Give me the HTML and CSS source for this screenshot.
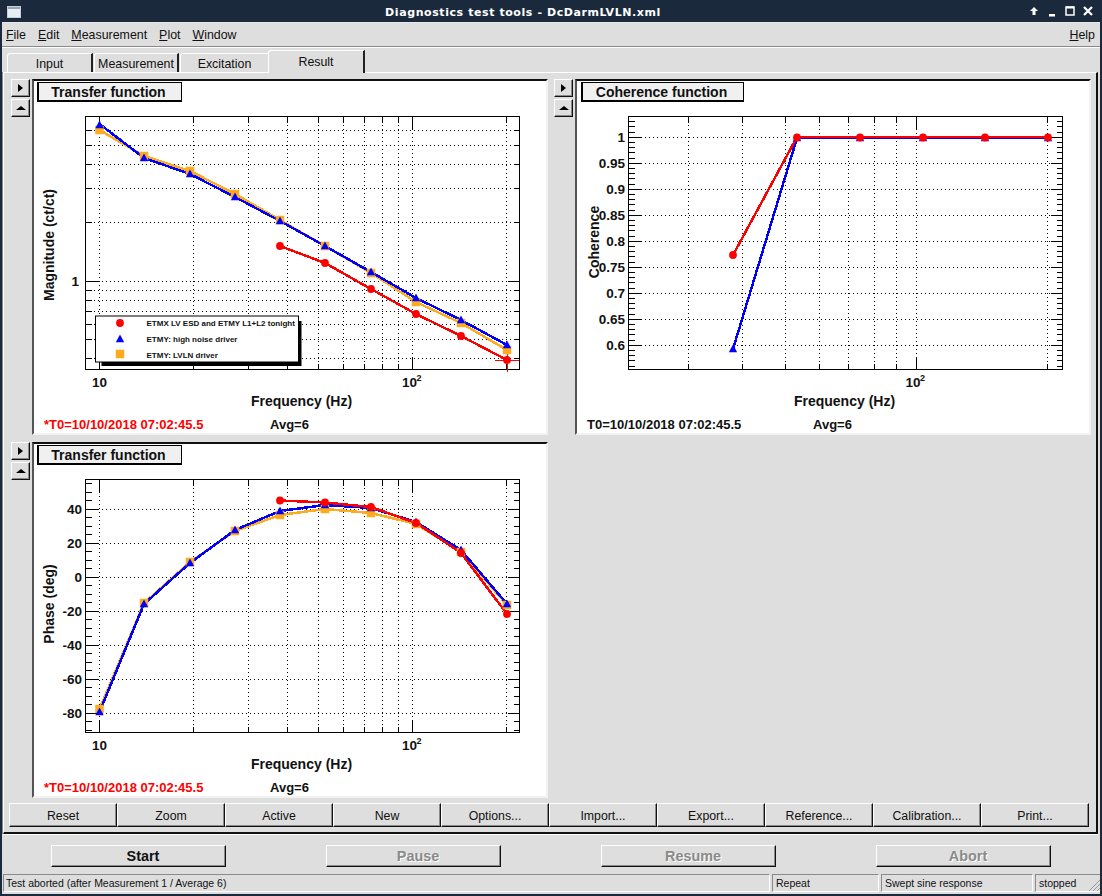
FILE: index.html
```html
<!DOCTYPE html>
<html lang="en">
<head>
  <meta charset="UTF-8" />
  <title>Diagnostics test tools - DcDarmLVLN.xml</title>
  <link rel="stylesheet" href="styles.css">
</head>
<body>

<div class="window">
  <!-- Title bar -->
  <header class="titlebar">
    <svg class="win-icon" width="14" height="12" viewBox="0 0 14 12">
      <rect width="14" height="12" fill="#e8eef4"/>
      <rect width="14" height="3" fill="#8fa6bd"/>
      <rect x="0.5" y="0.5" width="13" height="11" fill="none" stroke="#c4d0dc"/>
    </svg>
    <span class="win-title">Diagnostics test tools - DcDarmLVLN.xml</span>
    <div class="win-controls">
      <svg width="18" height="14" viewBox="0 0 18 14"><path d="M9 3l4 4h-2.500v4h-3v-4h-2.500z" fill="#fff"/></svg>
      <svg width="18" height="14" viewBox="0 0 18 14"><rect x="6" y="10" width="6" height="2.500" fill="#fff"/></svg>
      <svg width="18" height="14" viewBox="0 0 18 14"><rect x="5" y="3" width="8" height="8" fill="none" stroke="#fff" stroke-width="1.500"/><rect x="5" y="2.500" width="8" height="2" fill="#fff"/></svg>
      <svg width="18" height="14" viewBox="0 0 18 14"><path d="M5 3l8 8M13 3l-8 8" stroke="#fff" stroke-width="2.200"/></svg>
    </div>
  </header>

  <!-- Menu -->
  <nav class="menubar">
    <a><u>F</u>ile</a>
    <a><u>E</u>dit</a>
    <a><u>M</u>easurement</a>
    <a><u>P</u>lot</a>
    <a><u>W</u>indow</a>
    <a class="menu-help"><u>H</u>elp</a>
  </nav>

  <!-- Tabs -->
  <div class="tabs">
    <div class="tab tab-input">Input</div>
    <div class="tab tab-meas">Measurement</div>
    <div class="tab tab-exc">Excitation</div>
    <div class="tab tab-result">Result</div>
  </div>

  <div class="panel">
    <div class="plots">

      <!-- Magnitude -->
      <div class="plot-cell">
        <div class="side-btns">
          <button class="side-btn"><span class="arrow-right"></span></button>
          <button class="side-btn"><span class="arrow-up"></span></button>
        </div>
        <div class="canvas">
          <svg id="magnitude" width="512" height="352" viewBox="34 81 512 352">
            <defs>
              <circle id="dot" r="3.900" fill="#f00"/>
              <rect id="sq" x="-4.250" y="-4.250" width="8.500" height="8.500" fill="#ffab1e"/>
              <polygon id="tri" points="0,-4.500 4.200,3.300 -4.200,3.300" fill="#00f"/>
            </defs>
            <g class="title-box">
              <rect x="37" y="82" width="145" height="20" fill="#000"/>
              <rect x="39" y="83" width="142" height="17" fill="#f0f0f0"/>
              <text x="108.500" y="97" class="title-text">Transfer function</text>
            </g>
            <text x="79" y="286" class="tick-y">1</text>
            <text x="99.500" y="387" class="tick-x">10</text>
            <text x="409.500" y="387" class="tick-x">10</text>
            <text x="416.500" y="381" class="tick-sup">2</text>
            <text x="301.500" y="406" class="axis-title">Frequency (Hz)</text>
            <text transform="translate(54 245) rotate(-90)" class="axis-title">Magnitude (ct/ct)</text>
            <text x="44" y="429" class="stamp stamp-red">*T0=10/10/2018 07:02:45.5</text>
            <text x="270" y="429" class="stamp">Avg=6</text>

            <polyline class="trace trace-orange" points="99.500,130 144,156 190,171 235,194 280,220 325,246 371,273 416,302 461,323 507,350"/>
            <polyline class="trace trace-blue" points="99.500,124 144,158 190,174 235,197 280,221 325,246 371,272 416,298 461,320 507,345"/>
            <polyline class="trace trace-red" points="280,246 325,263 371,289 416,314 461,336 507,360"/>
            <path class="cross" d="M495 360.500h24M507.500 346v26"/>
            <g>
              <use href="#sq" x="99.500" y="130"/><use href="#sq" x="144" y="156"/><use href="#sq" x="190" y="171"/><use href="#sq" x="235" y="194"/><use href="#sq" x="280" y="220"/><use href="#sq" x="325" y="246"/><use href="#sq" x="371" y="273"/><use href="#sq" x="416" y="302"/><use href="#sq" x="461" y="323"/><use href="#sq" x="507" y="350"/>
              <use href="#tri" x="99.500" y="125"/><use href="#tri" x="144" y="158"/><use href="#tri" x="190" y="174"/><use href="#tri" x="235" y="197"/><use href="#tri" x="280" y="221"/><use href="#tri" x="325" y="246"/><use href="#tri" x="371" y="272"/><use href="#tri" x="416" y="298"/><use href="#tri" x="461" y="320"/><use href="#tri" x="507" y="345"/>
              <use href="#dot" x="280" y="246"/><use href="#dot" x="325" y="263"/><use href="#dot" x="371" y="289"/><use href="#dot" x="416" y="314"/><use href="#dot" x="461" y="336"/><use href="#dot" x="507" y="360"/>
            </g>

            <!-- Legend -->
            <rect x="101.500" y="321" width="200" height="45" fill="#000"/>
            <rect x="95.500" y="316" width="203" height="46" fill="#fff" stroke="#000"/>
            <use href="#dot" x="120" y="323"/>
            <use href="#tri" x="120" y="339"/>
            <use href="#sq" x="120" y="354"/>
            <text x="146.500" y="326" class="legend-text">ETMX LV ESD and ETMY L1+L2 tonight</text>
            <text x="146.500" y="342" class="legend-text">ETMY: high noise driver</text>
            <text x="146.500" y="358" class="legend-text">ETMY: LVLN driver</text>
          </svg>
        </div>
      </div>

      <!-- Coherence -->
      <div class="plot-cell">
        <div class="side-btns">
          <button class="side-btn"><span class="arrow-right"></span></button>
          <button class="side-btn"><span class="arrow-up"></span></button>
        </div>
        <div class="canvas">
          <svg id="coherence" width="512" height="352" viewBox="577 81 512 352">
            <g class="title-box">
              <rect x="581" y="82" width="163" height="20" fill="#000"/>
              <rect x="583" y="83" width="160" height="17" fill="#f0f0f0"/>
              <text x="661.500" y="97" class="title-text">Coherence function</text>
            </g>
            <text x="625" y="142" class="tick-y">1</text>
            <text x="625" y="168" class="tick-y">0.95</text>
            <text x="625" y="194" class="tick-y">0.9</text>
            <text x="625" y="220" class="tick-y">0.85</text>
            <text x="625" y="246" class="tick-y">0.8</text>
            <text x="625" y="272" class="tick-y">0.75</text>
            <text x="625" y="298" class="tick-y">0.7</text>
            <text x="625" y="324" class="tick-y">0.65</text>
            <text x="625" y="350" class="tick-y">0.6</text>
            <text x="913" y="387" class="tick-x">10</text>
            <text x="920" y="381" class="tick-sup">2</text>
            <text x="844.500" y="406" class="axis-title">Frequency (Hz)</text>
            <text transform="translate(599 242) rotate(-90)" class="axis-title">Coherence</text>
            <text x="587" y="429" class="stamp">T0=10/10/2018 07:02:45.5</text>
            <text x="813" y="429" class="stamp">Avg=6</text>

            <polyline class="trace trace-blue" points="733,349 797,138 860,138 923,138 985,138 1048,138"/>
            <polyline class="trace trace-red" points="733,255 797,137 860,137 923,137 985,137 1048,137"/>
            <use href="#tri" x="733" y="349"/><use href="#tri" x="797" y="138"/><use href="#tri" x="860" y="138"/><use href="#tri" x="923" y="138"/><use href="#tri" x="985" y="138"/><use href="#tri" x="1048" y="138"/>
            <use href="#dot" x="733" y="255"/><use href="#dot" x="797" y="137.500"/><use href="#dot" x="860" y="137.500"/><use href="#dot" x="923" y="137.500"/><use href="#dot" x="985" y="137.500"/><use href="#dot" x="1048" y="137.500"/>
          </svg>
        </div>
      </div>

      <!-- Phase -->
      <div class="plot-cell">
        <div class="side-btns">
          <button class="side-btn"><span class="arrow-right"></span></button>
          <button class="side-btn"><span class="arrow-up"></span></button>
        </div>
        <div class="canvas">
          <svg id="phase" width="512" height="352" viewBox="34 444 512 352">
            <g class="title-box">
              <rect x="37" y="445" width="145" height="20" fill="#000"/>
              <rect x="39" y="446" width="142" height="17" fill="#f0f0f0"/>
              <text x="108.500" y="460" class="title-text">Transfer function</text>
            </g>
            <text x="82" y="514" class="tick-y">40</text>
            <text x="82" y="548" class="tick-y">20</text>
            <text x="82" y="582" class="tick-y">0</text>
            <text x="82" y="616" class="tick-y">-20</text>
            <text x="82" y="650" class="tick-y">-40</text>
            <text x="82" y="684" class="tick-y">-60</text>
            <text x="82" y="718" class="tick-y">-80</text>
            <text x="99.500" y="750" class="tick-x">10</text>
            <text x="409.500" y="750" class="tick-x">10</text>
            <text x="416.500" y="744" class="tick-sup">2</text>
            <text x="301.500" y="769" class="axis-title">Frequency (Hz)</text>
            <text transform="translate(54 604) rotate(-90)" class="axis-title">Phase (deg)</text>
            <text x="44" y="792" class="stamp stamp-red">*T0=10/10/2018 07:02:45.5</text>
            <text x="270" y="792" class="stamp">Avg=6</text>

            <polyline class="trace trace-orange" points="99.500,709 144,603 190,562 235,531 280,515 325,509 371,513 416,524 461,552 507,605"/>
            <polyline class="trace trace-blue" points="99.500,712 144,604 190,563 235,530 280,511 325,505 371,508 416,522 461,550 507,604"/>
            <polyline class="trace trace-red" points="280,500.500 325,502.500 371,507 416,523 461,553 507,614"/>
            <use href="#sq" x="99.500" y="709"/><use href="#sq" x="144" y="603"/><use href="#sq" x="190" y="562"/><use href="#sq" x="235" y="531"/><use href="#sq" x="280" y="515"/><use href="#sq" x="325" y="509"/><use href="#sq" x="371" y="513"/><use href="#sq" x="416" y="524"/><use href="#sq" x="461" y="552"/><use href="#sq" x="507" y="605"/>
            <use href="#tri" x="99.500" y="712"/><use href="#tri" x="144" y="604"/><use href="#tri" x="190" y="563"/><use href="#tri" x="235" y="530"/><use href="#tri" x="280" y="511"/><use href="#tri" x="325" y="505"/><use href="#tri" x="371" y="508"/><use href="#tri" x="416" y="522"/><use href="#tri" x="461" y="550"/><use href="#tri" x="507" y="604"/>
            <use href="#dot" x="280" y="500.500"/><use href="#dot" x="325" y="502.500"/><use href="#dot" x="371" y="507"/><use href="#dot" x="416" y="523"/><use href="#dot" x="461" y="553"/><use href="#dot" x="507" y="614"/>
          </svg>
        </div>
      </div>

    </div>

    <div class="actions">
      <button class="btn">Reset</button>
      <button class="btn">Zoom</button>
      <button class="btn">Active</button>
      <button class="btn">New</button>
      <button class="btn">Options...</button>
      <button class="btn">Import...</button>
      <button class="btn">Export...</button>
      <button class="btn">Reference...</button>
      <button class="btn">Calibration...</button>
      <button class="btn">Print...</button>
    </div>
  </div>

  <!-- Run controls -->
  <div class="run-row">
    <button class="run-btn">Start</button>
    <button class="run-btn disabled">Pause</button>
    <button class="run-btn disabled">Resume</button>
    <button class="run-btn disabled">Abort</button>
  </div>

  <footer class="statusbar">
    <div class="field field-msg">Test aborted (after Measurement 1 / Average 6)</div>
    <div class="field field-repeat">Repeat</div>
    <div class="field field-type">Swept sine response</div>
    <div class="field field-state">stopped
      <svg class="grip" width="11" height="11" viewBox="0 0 11 11">
        <path d="M0 11L11 0M4 11l7-7M8 11l3-3" stroke="#999" fill="none"/>
      </svg>
    </div>
  </footer>
</div>

<script src="plots.js"></script>
</body>
</html>
```

FILE: styles.css
```css
* {
  margin: 0;
  padding: 0;
  box-sizing: border-box;
}
html, body {
  width: 1102px;
  height: 896px;
  overflow: hidden;
}
body {
  font-family: "Liberation Sans", Arial, sans-serif;
  font-size: 12px;
  color: #111;
  background: #1a2a3c;
}
button {
  font-family: inherit;
  color: inherit;
}
.window {
  height: 896px;
  display: flex;
  flex-direction: column;
  background: #dedede;
  border-left: 2px solid #1a2a3c;
  border-right: 2px solid #1a2a3c;
  border-bottom: 2px solid #1a2a3c;
}

/* Title bar */
.titlebar {
  height: 23px;
  flex: none;
  display: flex;
  align-items: center;
  background: #1a2a3c;
  border-bottom: 1px solid #e8e8e8;
  color: #fff;
}
.win-icon {
  margin-left: 5px;
  margin-top: 1px;
}
.win-title {
  flex: 1;
  padding-top: 2px;
  text-align: center;
  font-family: "DejaVu Sans", sans-serif;
  font-weight: bold;
  font-size: 11px;
  letter-spacing: 0.58px;
}
.win-controls {
  display: flex;
  margin-right: 3px;
}

/* Menu */
.menubar {
  height: 24px;
  flex: none;
  display: flex;
  align-items: center;
  padding-left: 4px;
  gap: 12px;
  border-bottom: 1px solid #8a8a8a;
  box-shadow: 0 1px 0 #fff;
  font-size: 12.400px;
}
.menu-help {
  margin-left: auto;
  margin-right: 5px;
}

/* Tabs */
.tabs {
  height: 25px;
  flex: none;
  display: flex;
  align-items: flex-end;
  padding-left: 5px;
  font-size: 12.400px;
}
.tab {
  height: 19px;
  padding-top: 3px;
  text-align: center;
  border-top: 1px solid #fff;
  border-left: 1px solid #fff;
  border-right: 2px solid #222;
  border-top-left-radius: 3px;
  margin-right: 1px;
}
.tab-input { width: 86px; }
.tab-meas { width: 85px; }
.tab-exc { width: 88px; border-right: 0; margin-right: 0; }
.tab-result {
  width: 97px;
  height: 23px;
  margin-bottom: -1px;
  padding-top: 4px;
  background: #dedede;
  position: relative;
}
.panel {
  flex: none;
  height: 762px;
  margin: 0 2px 0 1px;
  padding: 6px 0 0;
  border-top: 1px solid #fff;
  border-left: 1px solid #fff;
  border-right: 2px solid #111;
  border-bottom: 2px solid #111;
  box-shadow: 0 1px 0 #fff, -1px 0 0 #8a8a8a;
}

/* Plots */
.plots {
  display: grid;
  grid-template-columns: 543px 516px;
  grid-auto-rows: 356px;
  row-gap: 7px;
  margin-left: 7px;
}
.plot-cell {
  display: flex;
  gap: 2px;
}
.side-btns {
  width: 19px;
  display: flex;
  flex-direction: column;
  gap: 2px;
  flex: none;
}
.side-btn {
  width: 19px;
  height: 18px;
  display: flex;
  align-items: center;
  justify-content: center;
  background: #dedede;
  border: 1px solid;
  border-color: #fff #111 #111 #fff;
  box-shadow: inset -1px -1px 0 #8a8a8a;
}
.arrow-right {
  border-left: 5px solid #000;
  border-top: 4px solid transparent;
  border-bottom: 4px solid transparent;
}
.arrow-up {
  border-bottom: 4px solid #000;
  border-left: 5px solid transparent;
  border-right: 5px solid transparent;
}
.canvas {
  width: 516px;
  height: 356px;
  flex: none;
  background: #fff;
  border: 2px solid;
  border-color: #111 #f2f2f2 #f2f2f2 #555;
}
.canvas svg {
  display: block;
}
.grid-line {
  stroke: #000;
  stroke-dasharray: 1.500 2.500;
  fill: none;
  shape-rendering: crispEdges;
}
.tick-line, .frame {
  stroke: #000;
  fill: none;
  shape-rendering: crispEdges;
}
.trace {
  fill: none;
  stroke-width: 2.500;
  shape-rendering: crispEdges;
}
.trace-orange { stroke: #ffab1e; }
.trace-blue { stroke: #00f; }
.trace-red { stroke: #f00; }
.cross {
  stroke: #f00;
  fill: none;
  shape-rendering: crispEdges;
}
svg text {
  font-family: "Liberation Sans", Arial, sans-serif;
  font-weight: bold;
  fill: #111;
}
.title-text {
  font-size: 14px;
  text-anchor: middle;
}
.tick-y {
  font-size: 13.500px;
  text-anchor: end;
}
.tick-x {
  font-size: 13.500px;
  text-anchor: middle;
}
.tick-sup {
  font-size: 9px;
}
.axis-title {
  font-size: 14px;
  text-anchor: middle;
}
.stamp {
  font-size: 13px;
}
.stamp-red {
  fill: #f00;
}
.legend-text {
  font-size: 8px;
}

/* Buttons */
.actions {
  display: flex;
  margin: 5px 0 0 5px;
}
.btn {
  width: 108px;
  height: 24px;
  padding-top: 1px;
  background: #dedede;
  border: 1px solid;
  border-color: #fff #111 #111 #fff;
  box-shadow: inset -1px -1px 0 #8a8a8a;
  font-size: 12.300px;
}
.run-row {
  flex: none;
  display: flex;
  gap: 100px;
  padding-left: 49px;
  margin-top: 11px;
}
.run-btn {
  width: 175px;
  height: 22px;
  padding-left: 9px;
  background: #dedede;
  border: 1px solid;
  border-color: #fff #111 #111 #fff;
  box-shadow: inset -1px -1px 0 #8a8a8a;
  font-size: 14.400px;
  font-weight: bold;
}
.run-btn.disabled {
  color: #8a8a8a;
  text-shadow: 1px 1px 0 #fff;
}

/* Status */
.statusbar {
  flex: none;
  display: flex;
  gap: 2px;
  height: 18px;
  margin: 7px 0 0 1px;
  font-size: 10.500px;
}
.field {
  display: flex;
  align-items: center;
  justify-content: space-between;
  padding-left: 3px;
  border: 1px solid;
  border-color: #8a8a8a #fff #fff #8a8a8a;
  white-space: nowrap;
}
.field-msg { width: 767px; padding-left: 2px; }
.field-repeat { width: 107px; }
.field-type { width: 152px; }
.field-state {
  flex: 1;
  border-right: 0;
}
.grip {
  align-self: flex-end;
}
```

FILE: plots.js
```js
// Grid lines, ticks and the frame of each plot. Text and traces are in index.html.
const NS = 'http://www.w3.org/2000/svg';
const FREQS = [10, 20, 30, 40, 50, 60, 70, 80, 90, 100, 200];

function snap(v) {
  return Math.floor(v) + 0.5;
}

function logTicks(values, fn) {
  return values.map(v => ({ y: fn(v), major: v === 1, grid: true }));
}

function linTicks(from, to, step, every, fn) {
  const out = [];
  for (let v = from; v <= to + 0.001; v += step) {
    const major = Math.round(v / step) % every === 0;
    out.push({ y: fn(v), major, grid: major });
  }
  return out;
}

const plots = [
  {
    id: 'magnitude', left: 85.5, right: 519.5, top: 116.5, bottom: 369.5,
    fx: f => 99.5 + 313 * Math.log10(f / 10),
    ys: logTicks([0.4, 0.5, 0.6, 0.7, 0.8, 0.9, 1, 2, 3, 4, 5, 6], v => 281.3 - 193.7 * Math.log10(v))
  },
  {
    id: 'coherence', left: 628.5, right: 1062.5, top: 116.5, bottom: 369.5,
    fx: f => 916.3 + 436 * Math.log10(f / 100),
    ys: linTicks(0.56, 1.04, 0.01, 5, v => 137.3 + (1 - v) * 520)
  },
  {
    id: 'phase', left: 85.5, right: 519.5, top: 479.5, bottom: 732.5,
    fx: f => 99.5 + 313 * Math.log10(f / 10),
    ys: linTicks(-90, 55, 5, 4, v => 577.3 - 1.7 * v)
  }
];

function addPath(svg, cls, d) {
  const p = document.createElementNS(NS, 'path');
  p.setAttribute('class', cls);
  p.setAttribute('d', d);
  svg.insertBefore(p, svg.children[svg.querySelector('defs') ? 1 : 0]);
}

plots.forEach(plot => {
  const svg = document.getElementById(plot.id);
  let grid = '';
  let ticks = '';

  FREQS.forEach(f => {
    const x = snap(plot.fx(f));
    if (x <= plot.left || x >= plot.right) return;
    const len = f === 10 || f === 100 ? 12 : 6;
    grid += `M${x} ${plot.top}V${plot.bottom}`;
    ticks += `M${x} ${plot.top}v${len}M${x} ${plot.bottom}v${-len}`;
  });

  plot.ys.forEach(t => {
    const y = snap(t.y);
    if (y <= plot.top || y >= plot.bottom) return;
    const len = t.major ? 12 : 6;
    if (t.grid) grid += `M${plot.left} ${y}H${plot.right}`;
    ticks += `M${plot.left} ${y}h${len}M${plot.right} ${y}h${-len}`;
  });

  const frame = `M${plot.left} ${plot.top}H${plot.right}V${plot.bottom}H${plot.left}Z`;
  addPath(svg, 'frame', frame);
  addPath(svg, 'tick-line', ticks);
  addPath(svg, 'grid-line', grid);
});
```
